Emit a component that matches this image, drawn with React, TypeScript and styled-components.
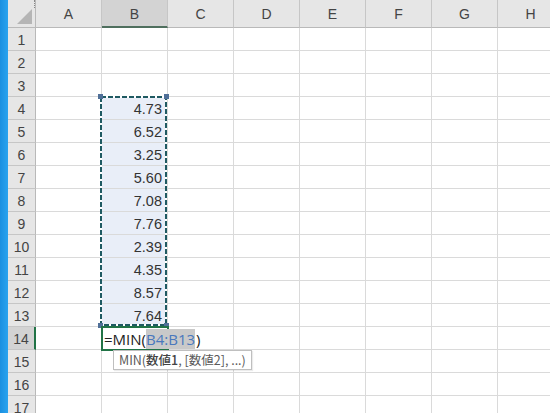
import React from "react";
import styled, { createGlobalStyle } from "styled-components";

const Global = createGlobalStyle`
  html, body { margin: 0; padding: 0; background: #fff; overflow: hidden; }
  body { font-family: "Liberation Sans", Arial, sans-serif; }
`;

const COLS = ["A", "B", "C", "D", "E", "F", "G", "H"];
const ROWS = 17;
const VALUES: Record<number, string> = {
  4: "4.73", 5: "6.52", 6: "3.25", 7: "5.60", 8: "7.08",
  9: "7.76", 10: "2.39", 11: "4.35", 12: "8.57", 13: "7.64",
};

const Page = styled.div`
  display: flex;
  width: 550px;
  height: 413px;
  overflow: hidden;
`;

const Strip = styled.div`
  width: 8px;
  flex: none;
  background: linear-gradient(to right, #1a8fe0, #2aa3ef);
`;

const Sheet = styled.div`
  position: relative;
  display: grid;
  grid-template-columns: 28px repeat(8, 66px);
  grid-template-rows: 28px repeat(${ROWS}, 23px);
  flex: none;
`;

const Corner = styled.div`
  position: relative;
  background: #e6e6e6;
  border-right: 1px solid #b9b9b9;
  border-bottom: 1px solid #b9b9b9;
  box-sizing: border-box;
  &::after {
    content: "";
    position: absolute;
    right: 3px;
    bottom: 3px;
    width: 0;
    height: 0;
    border-left: 15px solid transparent;
    border-bottom: 15px solid #b5b5b5;
  }
`;

const ColHead = styled.div<{ $sel?: boolean }>`
  display: flex;
  align-items: center;
  justify-content: center;
  box-sizing: border-box;
  background: ${(p) => (p.$sel ? "#d3d3d3" : "#e6e6e6")};
  border-right: 1px solid #c6c6c6;
  border-bottom: ${(p) => (p.$sel ? "2px solid #4f6f5e" : "1px solid #b9b9b9")};
  padding-top: ${(p) => (p.$sel ? "1px" : "0")};
  color: #444;
  font-size: 14px;
`;

const RowHead = styled.div<{ $sel?: boolean }>`
  display: flex;
  align-items: center;
  justify-content: center;
  box-sizing: border-box;
  background: ${(p) => (p.$sel ? "#d3d3d3" : "#e6e6e6")};
  border-bottom: 1px solid #c6c6c6;
  border-right: ${(p) => (p.$sel ? "2px solid #217346" : "1px solid #b9b9b9")};
  color: #444;
  font-size: 14px;
  padding-top: 1px;
`;

const Cell = styled.div<{ $range?: boolean }>`
  display: flex;
  align-items: center;
  justify-content: flex-end;
  box-sizing: border-box;
  padding: 0 5px 0 0;
  background: ${(p) => (p.$range ? "#e9eef8" : "#fff")};
  border-right: 1px solid #dadada;
  border-bottom: 1px solid #dadada;
  color: #333;
  font-size: 14.5px;
  padding-top: 2px;
`;

const EditCell = styled.div`
  position: relative;
  display: flex;
  align-items: center;
  box-sizing: border-box;
  border: 2px solid #217346;
  margin: -1px 0 0 -1px;
  width: 68px;
  height: 25px;
  padding-left: 1px;
  white-space: nowrap;
  overflow: visible;
  z-index: 3;
  font-size: 15px;
  color: #222;
  font-family: "Open Sans", "Liberation Sans", sans-serif;
`;

const Ref = styled.span`
  color: #4a78bd;
  background: #c9c9c9;
`;

const Caret = styled.span`
  display: inline-block;
  width: 1px;
  height: 19px;
  background: #111;
  vertical-align: middle;
  margin: 0 1px 0 0;
`;

const Ants = styled.svg`
  position: absolute;
  left: 92px;
  top: 96px;
  overflow: visible;
  z-index: 2;
  pointer-events: none;
`;

const Tip = styled.div`
  position: absolute;
  left: 105px;
  top: 350px;
  z-index: 4;
  background: #fff;
  border: 1px solid #bfbfbf;
  box-shadow: 1px 1px 1px rgba(0, 0, 0, 0.08);
  padding: 1px 5px 1px 5px;
  font-size: 12.5px;
  color: #5a5a5a;
  white-space: nowrap;
  font-family: "Noto Sans CJK JP", "Noto Sans", sans-serif;
  line-height: 16px;
`;

const Bold = styled.span`
  font-weight: 500;
  color: #444;
`;

const ResizeMark = styled.div`
  position: absolute;
  left: 26px;
  top: 0;
  width: 1px;
  height: 8px;
  border-left: 1px dotted #888;
`;

export default function App() {
  const cells: React.ReactNode[] = [];
  cells.push(<Corner key="corner" />);
  COLS.forEach((c) => cells.push(<ColHead key={c} $sel={c === "B"}>{c}</ColHead>));
  for (let r = 1; r <= ROWS; r++) {
    cells.push(
      <RowHead key={"r" + r} $sel={r === 14}>
        {r}
      </RowHead>
    );
    COLS.forEach((c) => {
      const k = c + r;
      if (c === "B" && r === 14) {
        cells.push(
          <EditCell key={k}>
            =MIN(<Ref>B4:B13</Ref>
            <Caret />)
          </EditCell>
        );
      } else if (c === "B" && VALUES[r]) {
        cells.push(
          <Cell key={k} $range>
            {VALUES[r]}
          </Cell>
        );
      } else {
        cells.push(<Cell key={k} />);
      }
    });
  }
  const w = 67;
  const h = 230;
  return (
    <>
      <Global />
      <Page>
        <Strip />
        <Sheet>
          {cells}
          <ResizeMark />
          <Ants width={w} height={h} viewBox={`0 0 ${w} ${h}`}>
            <rect x="1" y="1" width={w - 2} height={h - 2} fill="none" stroke="#fff" strokeWidth="2" />
            <rect
              x="1"
              y="1"
              width={w - 2}
              height={h - 2}
              fill="none"
              stroke="#1f5a62"
              strokeWidth="2"
              strokeDasharray="5 2"
            />
            <rect x="-2" y="-2" width="5" height="5" fill="#4f6f98" />
            <rect x={w - 3} y="-2" width="5" height="5" fill="#4f6f98" />
            <rect x="-2" y={h - 3} width="5" height="5" fill="#4f6f98" />
            <rect x={w - 3} y={h - 3} width="5" height="5" fill="#4f6f98" />
          </Ants>
          <Tip>
            MIN(<Bold>数値1</Bold>, [数値2], ...)
          </Tip>
        </Sheet>
      </Page>
    </>
  );
}
